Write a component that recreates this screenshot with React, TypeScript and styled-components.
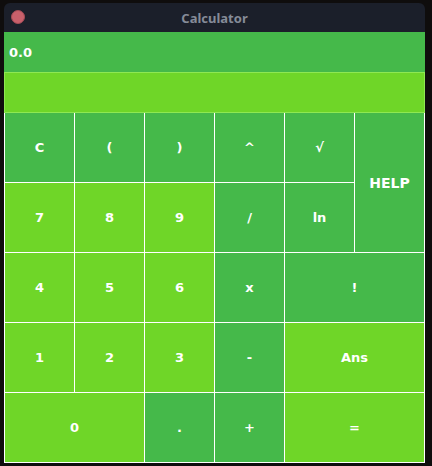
import styled, { createGlobalStyle } from 'styled-components';

const GlobalStyle = createGlobalStyle`
  html, body {
    margin: 0;
    padding: 0;
    background: #0f0d0d;
  }
  body {
    font-family: "DejaVu Sans", "Liberation Sans", sans-serif;
  }
`;

const Desktop = styled.div`
  width: 432px;
  height: 466px;
  padding: 3px 0 0 4px;
  box-sizing: border-box;
  background: #0f0d0d;
`;

const Window = styled.div`
  width: 421px;
  display: flex;
  flex-direction: column;
`;

const TitleBar = styled.div`
  height: 29px;
  background: #1b1f2a;
  border-radius: 6px 6px 0 0;
  display: flex;
  align-items: center;
  position: relative;
`;

const CloseDot = styled.span`
  position: absolute;
  left: 7px;
  top: 7px;
  width: 14px;
  height: 14px;
  border-radius: 50%;
  background: #c8606b;
  box-sizing: border-box;
  border: 1px solid #a24b55;
`;

const Title = styled.span`
  flex: 1;
  text-align: center;
  font-family: "Noto Sans", "DejaVu Sans", sans-serif;
  font-weight: 700;
  font-size: 13px;
  color: #858b98;
  padding-top: 1px;
`;

const Display = styled.div`
  height: 40px;
  background: #45b94a;
  display: flex;
  align-items: center;
  padding-left: 5px;
  color: #ffffff;
  font-weight: 700;
  font-size: 13px;
`;

const Entry = styled.div`
  height: 41px;
  box-sizing: border-box;
  background: #6fd628;
  border: 1px solid #8ee852;
`;

const Keypad = styled.div`
  display: grid;
  grid-template-columns: repeat(6, 69px);
  grid-auto-rows: 69px;
  gap: 1px;
  padding: 0 1px 1px 1px;
  background: #ffffff;
`;

const Key = styled.button<{ $tone: 'dark' | 'light'; $cols?: number; $rows?: number; $big?: boolean }>`
  grid-column: span ${p => p.$cols ?? 1};
  grid-row: span ${p => p.$rows ?? 1};
  border: none;
  margin: 0;
  padding: 0;
  background: ${p => (p.$tone === 'dark' ? '#45b94a' : '#6fd628')};
  color: #ffffff;
  font-family: "DejaVu Sans", "Liberation Sans", sans-serif;
  font-weight: 700;
  font-size: ${p => (p.$big ? '14px' : '13px')};
  display: flex;
  align-items: center;
  justify-content: center;
  cursor: pointer;
`;

type KeyDef = { label: string; tone: 'dark' | 'light'; cols?: number; rows?: number; big?: boolean };

const keys: KeyDef[] = [
  { label: 'C', tone: 'dark' },
  { label: '(', tone: 'dark' },
  { label: ')', tone: 'dark' },
  { label: '^', tone: 'dark' },
  { label: '√', tone: 'dark' },
  { label: 'HELP', tone: 'dark', rows: 2, big: true },
  { label: '7', tone: 'light' },
  { label: '8', tone: 'light' },
  { label: '9', tone: 'light' },
  { label: '/', tone: 'dark' },
  { label: 'ln', tone: 'dark' },
  { label: '4', tone: 'light' },
  { label: '5', tone: 'light' },
  { label: '6', tone: 'light' },
  { label: 'x', tone: 'dark' },
  { label: '!', tone: 'dark', cols: 2 },
  { label: '1', tone: 'light' },
  { label: '2', tone: 'light' },
  { label: '3', tone: 'light' },
  { label: '-', tone: 'dark' },
  { label: 'Ans', tone: 'light', cols: 2 },
  { label: '0', tone: 'light', cols: 2 },
  { label: '.', tone: 'dark' },
  { label: '+', tone: 'dark' },
  { label: '=', tone: 'light', cols: 2 },
];

export default function App() {
  return (
    <>
      <GlobalStyle />
      <Desktop>
        <Window>
          <TitleBar>
            <CloseDot />
            <Title>Calculator</Title>
          </TitleBar>
          <Display>0.0</Display>
          <Entry />
          <Keypad>
            {keys.map(k => (
              <Key key={k.label} $tone={k.tone} $cols={k.cols} $rows={k.rows} $big={k.big}>
                {k.label}
              </Key>
            ))}
          </Keypad>
        </Window>
      </Desktop>
    </>
  );
}
